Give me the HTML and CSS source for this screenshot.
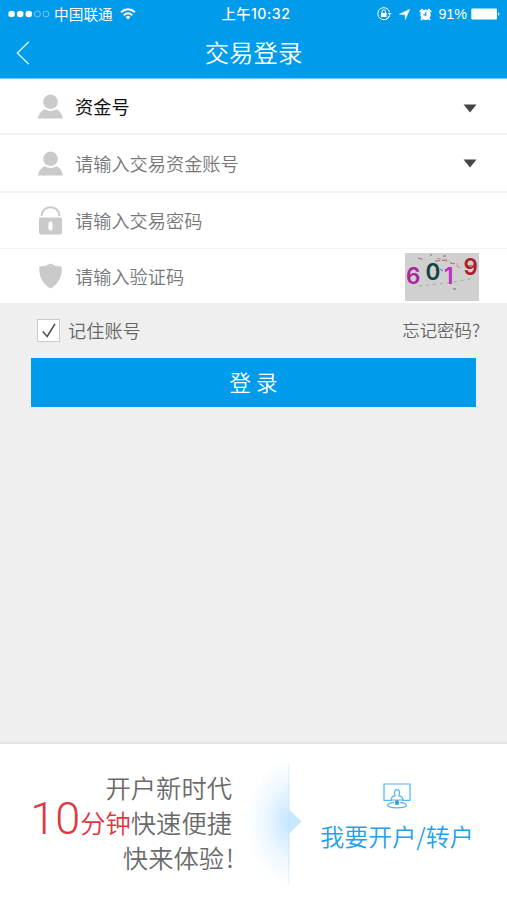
FILE: index.html
```html
<!DOCTYPE html>
<html lang="zh-CN">
<head>
<meta charset="utf-8">
<title>交易登录</title>
<link rel="stylesheet" href="styles.css">
</head>
<body>
<header class="header">
  <div class="status">
    <div class="status-left">
      <svg class="signal" width="42" height="8" viewBox="0 0 42 8"><g fill="#fff"><circle cx="3.6" cy="4" r="3.3"/><circle cx="12.2" cy="4" r="3.3"/><circle cx="20.8" cy="4" r="3.3"/></g><g fill="none" stroke="#8fd6fb" stroke-width=".8"><circle cx="29.4" cy="4" r="3"/><circle cx="38" cy="4" r="3"/></g></svg>
      <span class="carrier">中国联通</span>
      <svg class="wifi" width="16" height="12" viewBox="0 0 16 12" fill="none" stroke="#fff" stroke-width="2"><path d="M1 4.3Q8-1.8 15 4.3M3.7 7.2Q8 3.4 12.3 7.2"/><path d="M8 11.5 5.5 9Q8 7 10.5 9Z" fill="#fff" stroke="none"/></svg>
    </div>
    <div class="clock">上午10:32</div>
    <div class="status-right">
      <svg width="15" height="14" viewBox="0 0 15 14" fill="none" stroke="#fff"><path d="M12.5 8.5A6 6 0 1 1 12.6 5.2M9 12.4A6 6 0 0 0 12.5 9" stroke-width="1"/><path d="M10.8 6h3.8l-1.9 2.5z" fill="#fff" stroke="none"/><rect x="4" y="6" width="5.6" height="4" fill="#fff" stroke="none"/><path d="M5 6.3V4.7a1.8 1.8 0 0 1 3.6 0v1.6"/></svg>
      <svg class="locate" width="11" height="11" viewBox="0 0 11 11" fill="#fff"><path d="M10.8.2 6.200 10.800V5.800L.2 5.300z" stroke="#fff" stroke-width=".4"/></svg>
      <svg class="alarm" width="13" height="13" viewBox="0 0 13 13"><circle cx="6.5" cy="6.8" r="5.2" fill="#fff"/><path d="M.8 3.8 3.7 1M12.2 3.8 9.3 1M3 10.5l-1 1.5M10 10.5l1 1.5" stroke="#fff" stroke-width="1.7"/><path d="M6.8 3.7v3.5L4.5 6.6" fill="none" stroke="#009bea" stroke-width="1.1"/></svg>
      <span class="percent">91%</span>
      <svg class="battery" width="30" height="12" viewBox="0 0 30 12" fill="#fff"><rect x=".3" y=".5" width="25.7" height="11" rx="1"/><path d="M27.3 4q2.4 2 0 4z"/></svg>
    </div>
  </div>
  <div class="titlebar">
    <svg class="back" width="14" height="24" viewBox="0 0 14 24" fill="none" stroke="#c5f2ff" stroke-width="1.5"><path d="M12.8.8 1.4 12l11.4 11.2"/></svg>
    <h1>交易登录</h1>
  </div>
</header>
<main>
  <section class="form">
    <div class="row row-type">
      <svg class="icon" width="26" height="25" viewBox="0 0 26 25" fill="#cacaca"><circle cx="13.500" cy="7.8" r="7.3"/><path d="M.9 24.500Q1.800 18.500 7.500 15.300q6 3.500 12 0 5.500 2.700 6.300 9.200z"/></svg>
      <span class="label selected">资金号</span>
      <svg class="arrow" width="14" height="9" viewBox="0 0 14 9"><path d="M.5.5h13L7 8.5z" fill="#464646"/></svg>
    </div>
    <div class="row row-account">
      <svg class="icon" width="26" height="25" viewBox="0 0 26 25" fill="#cacaca"><circle cx="13.500" cy="7.8" r="7.3"/><path d="M.9 24.500Q1.800 18.500 7.500 15.300q6 3.500 12 0 5.500 2.700 6.300 9.200z"/></svg>
      <span class="label">请输入交易资金账号</span>
      <svg class="arrow" width="14" height="9" viewBox="0 0 14 9"><path d="M.5.5h13L7 8.5z" fill="#464646"/></svg>
    </div>
    <div class="row row-password">
      <svg class="icon" width="26" height="29" viewBox="0 0 26 29"><path d="M4.5 10C5.5-1.8 21.5-1.8 22.5 10" fill="none" stroke="#cacaca" stroke-width="2"/><path fill="#cacaca" fill-rule="evenodd" d="M3.5 11.500h20Q25 11.500 25 13v13.500q0 2-2 2H4q-2 0-2-2V13q0-1.500 1.500-1.500zM11.500 17v6q0 1.500 2 1.500t2-1.500v-6q0-1.500-2-1.500t-2 1.500z"/></svg>
      <span class="label">请输入交易密码</span>
    </div>
    <div class="row row-code">
      <svg class="icon" width="26" height="26" viewBox="0 0 26 26"><path d="M13.500.4Q18.500 3.700 24.600 3.500 26 18 13.500 25.600 1 18 2.400 3.500 8.500 3.700 13.500.4z" fill="#cacaca"/></svg>
      <span class="label">请输入验证码</span>
      <svg class="captcha" width="74" height="48" viewBox="0 0 74 48"><rect width="74" height="48" fill="#d0d0d0"/><g fill="none" stroke-width="1"><path d="M13 5l7 2M30 8l12-1M45 10l8 1M62 13l8-1" stroke="#b5686c" stroke-dasharray="5 2"/><path d="M32 5l13 4 12 7" stroke="#dd7777" stroke-dasharray="4 3"/><path d="M14 33l20-2 15-2 20-4" stroke="#9bb09b" stroke-dasharray="3 4"/><path d="M25 2h2M38 3h3M48 36h3M35 16l3 2" stroke="#6d766d"/></g><g class="digits"><text x="1" y="31" fill="#aa249d">6</text><text x="20.500" y="27" fill="#143f42">0</text><text x="39" y="31" fill="#c22bc4">1</text><text x="58.500" y="22" fill="#b11c2c">9</text></g></svg>
    </div>
  </section>
  <section class="actions">
    <div class="options">
      <label class="remember"><span class="checkbox"><svg width="14" height="15" viewBox="0 0 14 15" fill="none" stroke="#4b4b4b" stroke-width="1.500"><path d="M.8 8.500 5.200 13.500 13 .9"/></svg></span>记住账号</label>
      <a class="forgot">忘记密码?</a>
    </div>
    <button class="login" type="button">登 录</button>
  </section>
</main>
<footer class="promo">
  <div class="slogan">
    <p>开户新时代</p>
    <p class="fast"><span class="ten">10</span><span class="red">分钟</span><span>快速便捷</span></p>
    <p class="last">快来体验<span class="bang">!</span></p>
  </div>
  <div class="divider"><svg width="54" height="130" viewBox="0 0 54 130"><defs><radialGradient id="glow" gradientUnits="userSpaceOnUse" cx="41" cy="64" r="64" gradientTransform="translate(41 0) scale(.66 1) translate(-41 0)"><stop offset="0" stop-color="#c3e7ff"/><stop offset=".25" stop-color="#d6eeff"/><stop offset=".6" stop-color="#f0f8ff"/><stop offset="1" stop-color="#fff"/></radialGradient><linearGradient id="edge" x1="0" y1="0" x2="0" y2="1"><stop offset="0" stop-color="#f3faff"/><stop offset=".2" stop-color="#cfeafc"/><stop offset=".5" stop-color="#c1e5ff"/><stop offset=".8" stop-color="#cfeafc"/><stop offset="1" stop-color="#f3faff"/></linearGradient></defs><path d="M0 0h41v130H0z" fill="url(#glow)"/><path d="M40 4h1.300v124H40z" fill="url(#edge)"/><path d="M41 51.500 53.500 63.500 41 76z" fill="#c8e8ff"/></svg></div>
  <div class="open">
    <svg width="28" height="26" viewBox="0 0 28 26" fill="none" stroke="#50b5f2" stroke-width="1.200"><path d="M9 17.300H1V1h26v16.300h-8"/><path d="M8 17q.4-3.700 4.300-4.300l-.6-1.500C9.500 5 18.500 5 16.300 11.200l-.6 1.500Q19.600 13.300 20 17z"/><path d="M11 19.300c-9.500 1.200-8.500 5.500 3 5.500s12.500-4.300 3-5.500"/><path d="M12.200 17.300h3.600v4.500h-3.600z" fill="#229fe9" stroke="none"/></svg>
    <span class="open-text">我要开户/转户</span>
  </div>
</footer>
</body>
</html>
```
FILE: styles.css
```css
* { box-sizing: border-box; }

body {
  margin: 0;
  width: 507px;
  height: 900px;
  display: flex;
  flex-direction: column;
  background: #efefef;
  color: #666;
  font-family: "Noto Sans CJK SC", sans-serif;
  font-weight: 350;
  overflow: hidden;
}

svg { display: block; flex: none; }
h1, p { margin: 0; font-weight: inherit; }
main { flex: 1; }

.header {
  height: 79px;
  background: #009bea;
  color: #fff;
  border-bottom: 1px solid #6bcdf8;
}

.status {
  display: grid;
  grid-template-columns: 1fr auto 1fr;
  height: 27px;
  padding: 0 6px 0 8px;
  font-size: 14.7px;
  line-height: 27px;
}
.status-left, .status-right { display: flex; align-items: center; }
.status-right { justify-content: flex-end; }
.carrier { margin-left: 4px; font-weight: 400; line-height: 25px; padding-bottom: 2px; }
.wifi { margin-left: 7px; }
.clock { padding-left: 3px; font-family: Inter, "Noto Sans CJK SC", sans-serif; font-weight: 500; font-size: 14.2px; letter-spacing: .5px; }
.locate { margin-left: 7px; }
.alarm { margin-left: 9px; }
.percent { margin-left: 6px; font-family: "Liberation Sans", sans-serif; font-size: 14.3px; padding-top: 1px; }
.battery { margin-left: 4px; }

.titlebar {
  display: grid;
  grid-template-columns: 40px 1fr 40px;
  align-items: center;
  height: 51px;
}
.back { margin-left: 16px; }
.titlebar h1 { padding-bottom: 2px; text-align: center; font-size: 24.4px; line-height: 36px; }

.form { background: #fff; }
.row {
  display: flex;
  align-items: center;
  height: 56px;
  padding: 0 28px 0 37px;
  border-bottom: 2px solid #f4f4f4;
}
.row-type { padding-top: 1px; }
.row-type .arrow { margin-top: 3px; }
.row-account { height: 58px; padding-top: 1px; }
.row-password { border-width: 1px; }
.row-code { height: 54px; border: 0; }
.label { margin-left: 12px; padding-bottom: 1px; font-size: 18.2px; line-height: 28px; color: #777; }
.row .selected { color: #111; font-weight: 400; }
.arrow { margin-left: auto; margin-right: 2px; }
.captcha { margin-left: auto; margin-top: 2px; }
.digits { font: 600 22.5px Inter, sans-serif; }

.actions { padding: 14px 31px 0; }
.options {
  display: flex;
  justify-content: space-between;
  align-items: center;
  height: 27px;
  margin: 0 -5px 14px 6px;
}
.remember { display: flex; align-items: center; font-size: 18.2px; line-height: 25px; }
.checkbox {
  display: grid;
  place-items: center;
  width: 23px;
  height: 23px;
  margin-right: 8px;
  border: 1px solid #ccc;
  background: #fff;
}
.forgot { margin-right: 1px; padding-bottom: 2px; font-size: 17.4px; line-height: 27px; }
.login {
  display: block;
  width: 445px;
  height: 49px;
  padding: 0 0 2px;
  border: 0;
  background: #009bea;
  color: #fff;
  font: 350 21.5px/47px "Noto Sans CJK SC", sans-serif;
}

.promo {
  display: flex;
  height: 158px;
  border-top: 2px solid #e4e4e4;
  background: #fff;
}
.slogan {
  width: 248px;
  padding: 26px 16px 0 0;
  text-align: right;
  font-size: 25.3px;
  line-height: 35px;
  color: #6a6a6a;
}
.slogan p { height: 35px; white-space: nowrap; }
.slogan .fast { display: flex; justify-content: flex-end; align-items: center; }
.ten { margin: -9px 0 0; font-family: Roboto, sans-serif; font-weight: 300; font-size: 45px; line-height: 35px; }
.ten, .red { color: #e0383e; }
.slogan .last { margin-right: -2px; }
.bang { margin-left: 2px; }
.divider { margin-top: 14px; }
.open {
  flex: 1;
  display: flex;
  flex-direction: column;
  align-items: center;
  padding: 39px 15px 0 0;
  color: #249fe9;
}
.open-text { margin-top: 9px; font-size: 24px; line-height: 36px; white-space: nowrap; }
```
